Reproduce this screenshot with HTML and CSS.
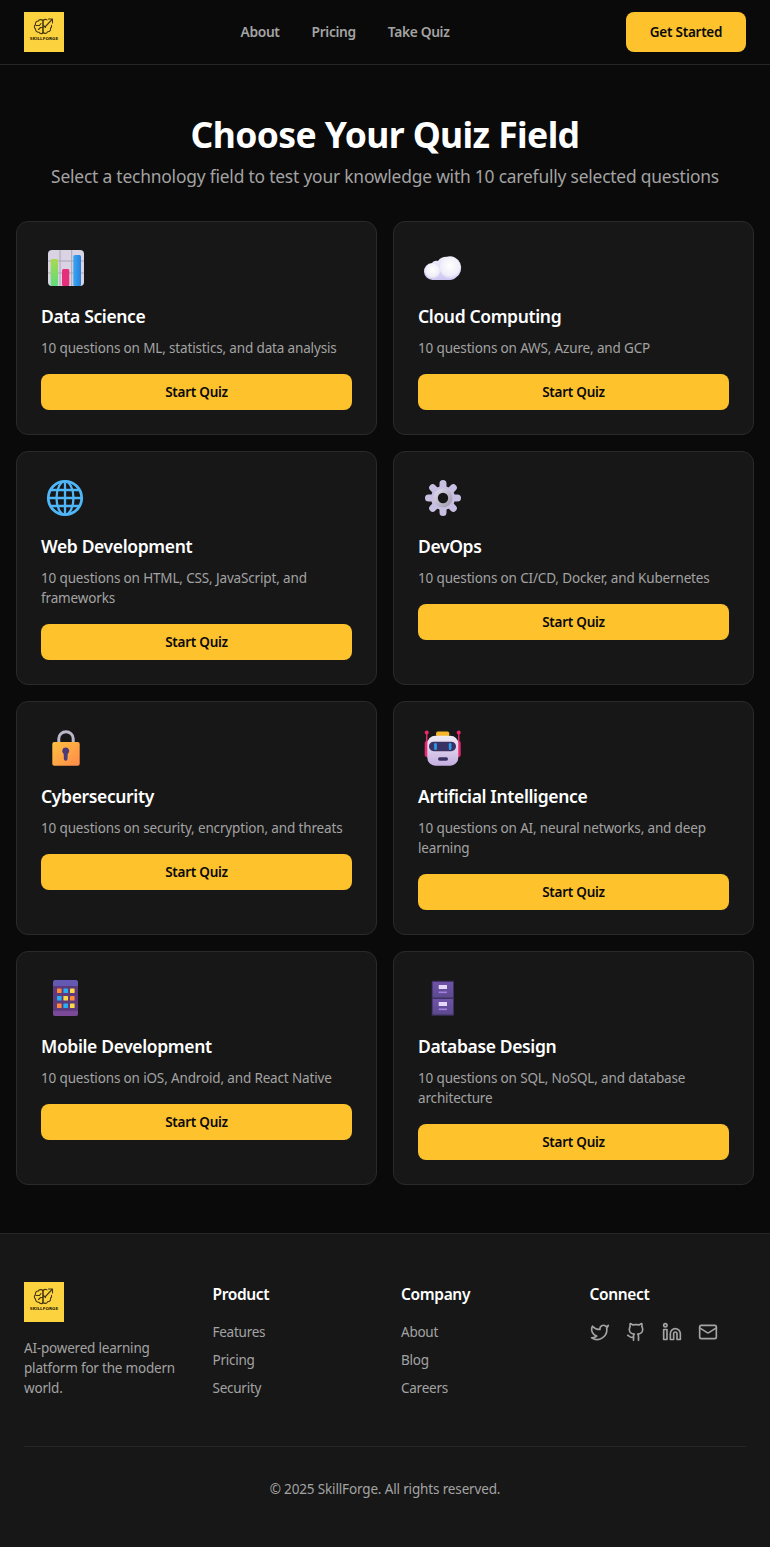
FILE: index.html
```html
<!DOCTYPE html>
<html lang="en">
<head>
<meta charset="utf-8">
<title>SkillForge - Choose Your Quiz Field</title>
<link rel="stylesheet" href="styles.css">
</head>
<body>
<header class="site-header">
  <svg class="logo" viewBox="0 0 40 40" role="img" aria-label="SkillForge">
    <rect width="40" height="40" fill="#fdd23f"/>
    <g fill="none" stroke="#453910" stroke-width="1.100" stroke-linecap="round" stroke-linejoin="round">
      <path d="M19 8.500c-1.500-1.500-4-1-4.500.5-2-.2-3.500 1.500-3 3.500-1.500 1-1.500 3.500 0 4.500-.2 2 1.500 3.500 3.500 3.200 1 1.800 3.500 2 4 .3z"/>
      <path d="M19 8.500c1.200-1.200 3-1.300 4-.6M19 20.500c1.500 1.500 4 1 4.500-.7 2 .2 3.500-1.500 3-3.500 1-.8 1.300-2 1-3"/>
      <path d="M19 8.500v12M12 13.500h3.500l1.500-2M14.500 17.500l2-2H19M19 13l2.500 2.500M21 15l7-7.500M24.500 7H28.500V11"/>
    </g>
    <text class="logo-text" x="20" y="28" text-anchor="middle">SKILLFORGE</text>
  </svg>
  <nav class="main-nav">
    <a href="#">About</a>
    <a href="#">Pricing</a>
    <a href="#">Take Quiz</a>
  </nav>
  <a class="cta" href="#">Get Started</a>
</header>

<main class="page">
  <section class="hero">
    <h1>Choose Your Quiz Field</h1>
    <p>Select a technology field to test your knowledge with 10 carefully selected questions</p>
  </section>

  <section class="quiz-grid">
    <article class="card">
      <svg class="card-icon" viewBox="0 0 50 44">
        <defs>
          <linearGradient id="g-green" x1="0" y1="0" x2="0" y2="1"><stop offset="0" stop-color="#a8d94f"/><stop offset="1" stop-color="#5fdc7c"/></linearGradient>
          <linearGradient id="g-blue" x1="0" y1="0" x2="1" y2="0"><stop offset="0" stop-color="#35a8f5"/><stop offset="1" stop-color="#2b7fd8"/></linearGradient>
        </defs>
        <rect x="7" y="4" width="36" height="36" rx="4" fill="#d9d3e3"/>
        <path d="M19 4v36M30.700 4v36M7 15h36M7 27h36" stroke="#aaa4b4" stroke-width="1"/>
        <rect x="9.700" y="13" width="7.300" height="27" rx="1.500" fill="url(#g-green)"/>
        <rect x="21" y="23" width="7.300" height="17" rx="1.500" fill="#e62f7a"/>
        <rect x="32.300" y="9" width="7.700" height="31" rx="1.500" fill="url(#g-blue)"/>
      </svg>
      <h2>Data Science</h2>
      <p>10 questions on ML, statistics, and data analysis</p>
      <a class="start" href="#">Start Quiz</a>
    </article>

    <article class="card">
      <svg class="card-icon" viewBox="0 0 50 44">
        <defs>
          <linearGradient id="g-cloud-base" x1="0" y1="0" x2="0" y2="1"><stop offset="0" stop-color="#f2f0fa"/><stop offset="1" stop-color="#cdc6f2"/></linearGradient>
          <radialGradient id="g-cloud" cx=".5" cy=".4" r=".65"><stop offset="0" stop-color="#ffffff"/><stop offset=".7" stop-color="#f0eef8"/><stop offset="1" stop-color="#d6d0f2"/></radialGradient>
        </defs>
        <path d="M15 34a8.500 8.500 0 0 1-1-17c1.500-2 3.500-2.500 6-2 2-3.500 6-4.500 9-4.300A11.500 11.500 0 0 1 38 31.500c-1.500 1.500-3.500 2.500-6 2.500z" fill="url(#g-cloud-base)"/>
        <circle cx="32" cy="21.800" r="10.500" fill="url(#g-cloud)"/>
        <circle cx="14.500" cy="25" r="7.500" fill="url(#g-cloud)"/>
      </svg>
      <h2>Cloud Computing</h2>
      <p>10 questions on AWS, Azure, and GCP</p>
      <a class="start" href="#">Start Quiz</a>
    </article>

    <article class="card">
      <svg class="card-icon" viewBox="0 0 50 44">
        <g fill="none" stroke="#4fb6f7" stroke-width="2.300">
          <circle cx="24" cy="22" r="16.700" stroke-width="2.800"/>
          <ellipse cx="24" cy="22" rx="8.500" ry="16.700"/>
          <path d="M24 5v34M7 22h34M9.500 14h29M9.500 30h29"/>
        </g>
      </svg>
      <h2>Web Development</h2>
      <p>10 questions on HTML, CSS, JavaScript, and frameworks</p>
      <a class="start" href="#">Start Quiz</a>
    </article>

    <article class="card">
      <svg class="card-icon" viewBox="0 0 50 44">
        <defs>
          <linearGradient id="g-ring" x1="0" y1="0" x2="1" y2="1"><stop offset="0" stop-color="#e4e0ee"/><stop offset="1" stop-color="#9c95ad"/></linearGradient>
        </defs>
        <g stroke="#c8bfe2" stroke-width="7" stroke-linecap="round">
          <path d="M25 7.500v29M10.500 22h29M14.700 11.700l20.600 20.600M35.300 11.700l-20.600 20.600"/>
        </g>
        <circle cx="25" cy="22" r="12" fill="#c8bfe2"/>
        <circle cx="25" cy="22" r="9.500" fill="url(#g-ring)"/>
        <circle cx="25" cy="22" r="5.200" fill="#171717"/>
      </svg>
      <h2>DevOps</h2>
      <p>10 questions on CI/CD, Docker, and Kubernetes</p>
      <a class="start" href="#">Start Quiz</a>
    </article>

    <article class="card">
      <svg class="card-icon" viewBox="0 0 50 44">
        <defs>
          <linearGradient id="g-lock" x1="0" y1="0" x2="1" y2="1"><stop offset="0" stop-color="#ffc23f"/><stop offset="1" stop-color="#ff8a4a"/></linearGradient>
        </defs>
        <path d="M17.800 18v-5.500a7 6.500 0 0 1 14.400 0V18" fill="none" stroke="#bdb6c8" stroke-width="3"/>
        <rect x="11.300" y="16" width="27.400" height="23.700" rx="2" fill="url(#g-lock)"/>
        <path d="M24.700 21.500a3.500 3.500 0 0 1 2 6.400L26.500 33a1.800 1.800 0 0 1-3.600 0l-.2-5.100A3.500 3.500 0 0 1 24.700 21.500z" fill="#4a3a78"/>
      </svg>
      <h2>Cybersecurity</h2>
      <p>10 questions on security, encryption, and threats</p>
      <a class="start" href="#">Start Quiz</a>
    </article>

    <article class="card">
      <svg class="card-icon" viewBox="0 0 50 44">
        <defs>
          <linearGradient id="g-head" x1="0" y1="0" x2="0" y2="1"><stop offset="0" stop-color="#efeaf4"/><stop offset="1" stop-color="#c4aee0"/></linearGradient>
        </defs>
        <path d="M8.700 8v22M40.700 8v22" stroke="#e02b6e" stroke-width="1.500"/>
        <rect x="6.700" y="15" width="5" height="16" rx="2" fill="#e8286e"/>
        <rect x="37.700" y="15" width="5" height="16" rx="2" fill="#e8286e"/>
        <circle cx="8.700" cy="6.500" r="2" fill="#f0286a"/>
        <circle cx="40.700" cy="6.500" r="2" fill="#f0286a"/>
        <rect x="18" y="5.500" width="13.300" height="5" rx="2" fill="#f6b52a"/>
        <rect x="9.300" y="9.700" width="31" height="30" rx="8" fill="url(#g-head)"/>
        <rect x="11" y="15.700" width="27" height="9.500" rx="4.700" fill="#3a3262"/>
        <rect x="16.200" y="17" width="2.600" height="7" rx="1.300" fill="#2a9df0"/>
        <rect x="30.800" y="17" width="2.600" height="7" rx="1.300" fill="#2a9df0"/>
        <rect x="20" y="31.300" width="10" height="3.400" rx="1.700" fill="#3a3262"/>
      </svg>
      <h2>Artificial Intelligence</h2>
      <p>10 questions on AI, neural networks, and deep learning</p>
      <a class="start" href="#">Start Quiz</a>
    </article>

    <article class="card">
      <svg class="card-icon" viewBox="0 0 50 44">
        <rect x="12" y="4" width="25" height="36" rx="2.500" fill="#5c3a7c"/>
        <path d="M12 10V6.500A2.500 2.500 0 0 1 14.500 4h20A2.500 2.500 0 0 1 37 6.500V10z" fill="#6459b2"/>
        <path d="M12 34.700h25V37.500a2.500 2.500 0 0 1-2.500 2.500h-20A2.500 2.500 0 0 1 12 37.500z" fill="#7a4a98"/>
        <rect x="16" y="12.500" width="4.600" height="4.600" rx=".6" fill="#ff8a3a"/>
        <rect x="22.400" y="12.500" width="4.600" height="4.600" rx=".6" fill="#27aef5"/>
        <rect x="29" y="12.500" width="4.600" height="4.600" rx=".6" fill="#fbdc45"/>
        <rect x="16" y="20" width="4.600" height="4.600" rx=".6" fill="#27aef5"/>
        <rect x="22.400" y="20" width="4.600" height="4.600" rx=".6" fill="#fbdc45"/>
        <rect x="29" y="20" width="4.600" height="4.600" rx=".6" fill="#ff8a3a"/>
        <rect x="16" y="27.400" width="4.600" height="4.600" rx=".6" fill="#ff8a3a"/>
        <rect x="22.400" y="27.400" width="4.600" height="4.600" rx=".6" fill="#27aef5"/>
        <rect x="29" y="27.400" width="4.600" height="4.600" rx=".6" fill="#fbdc45"/>
      </svg>
      <h2>Mobile Development</h2>
      <p>10 questions on iOS, Android, and React Native</p>
      <a class="start" href="#">Start Quiz</a>
    </article>

    <article class="card">
      <svg class="card-icon" viewBox="0 0 50 44">
        <defs>
          <linearGradient id="g-drawer" x1="0" y1="0" x2="0" y2="1"><stop offset="0" stop-color="#6f52a8"/><stop offset="1" stop-color="#5b4a8e"/></linearGradient>
        </defs>
        <rect x="13.700" y="4.700" width="22.300" height="35" rx="1" fill="#3f3060"/>
        <rect x="14.700" y="6" width="20.300" height="15.500" fill="url(#g-drawer)"/>
        <rect x="14.700" y="23" width="20.300" height="15.500" fill="url(#g-drawer)"/>
        <rect x="20.700" y="9" width="8.300" height="4" fill="#e4d8f6"/>
        <rect x="20.700" y="15.500" width="8.300" height="1.600" fill="#a57fe0"/>
        <rect x="20.700" y="26" width="8.300" height="4" fill="#e4d8f6"/>
        <rect x="20.700" y="32.500" width="8.300" height="1.600" fill="#a57fe0"/>
      </svg>
      <h2>Database Design</h2>
      <p>10 questions on SQL, NoSQL, and database architecture</p>
      <a class="start" href="#">Start Quiz</a>
    </article>
  </section>
</main>

<footer class="site-footer">
  <div class="footer-grid">
    <div class="footer-brand">
      <svg class="logo" viewBox="0 0 40 40" role="img" aria-label="SkillForge">
        <rect width="40" height="40" fill="#fdd23f"/>
        <g fill="none" stroke="#453910" stroke-width="1.100" stroke-linecap="round" stroke-linejoin="round">
          <path d="M19 8.500c-1.500-1.500-4-1-4.500.5-2-.2-3.500 1.500-3 3.500-1.500 1-1.500 3.500 0 4.500-.2 2 1.500 3.500 3.500 3.200 1 1.800 3.500 2 4 .3z"/>
          <path d="M19 8.500c1.200-1.200 3-1.300 4-.6M19 20.500c1.500 1.500 4 1 4.500-.7 2 .2 3.500-1.500 3-3.500 1-.8 1.300-2 1-3"/>
          <path d="M19 8.500v12M12 13.500h3.500l1.500-2M14.500 17.500l2-2H19M19 13l2.500 2.500M21 15l7-7.500M24.500 7H28.500V11"/>
        </g>
        <text class="logo-text" x="20" y="28" text-anchor="middle">SKILLFORGE</text>
      </svg>
      <p>AI-powered learning platform for the modern world.</p>
    </div>
    <div class="footer-col">
      <h3>Product</h3>
      <ul>
        <li><a href="#">Features</a></li>
        <li><a href="#">Pricing</a></li>
        <li><a href="#">Security</a></li>
      </ul>
    </div>
    <div class="footer-col">
      <h3>Company</h3>
      <ul>
        <li><a href="#">About</a></li>
        <li><a href="#">Blog</a></li>
        <li><a href="#">Careers</a></li>
      </ul>
    </div>
    <div class="footer-col">
      <h3>Connect</h3>
      <div class="socials">
        <a href="#" aria-label="Twitter"><svg viewBox="0 0 24 24"><path d="M22 4s-.7 2.100-2 3.400c1.600 10-9.400 17.300-18 11.600 2.200.1 4.400-.6 6-2C3 15.500.5 9.600 3 5c2.200 2.600 5.600 4.100 9 4-.9-4.200 4-6.600 7-3.800 1.100 0 3-1.200 3-1.200z"/></svg></a>
        <a href="#" aria-label="GitHub"><svg viewBox="0 0 24 24"><path d="M15 22v-4a4.800 4.800 0 0 0-1-3.500c3 0 6-2 6-5.500.08-1.250-.27-2.480-1-3.500.28-1.150.28-2.350 0-3.500 0 0-1 0-3 1.500-2.640-.5-5.360-.5-8 0C6 2 5 2 5 2c-.3 1.150-.3 2.350 0 3.500A5.403 5.403 0 0 0 4 9c0 3.500 3 5.500 6 5.500-.39.49-.68 1.050-.85 1.650-.17.6-.22 1.230-.15 1.850v4"/><path d="M9 18c-4.510 2-5-2-7-2"/></svg></a>
        <a href="#" aria-label="LinkedIn"><svg viewBox="0 0 24 24"><path d="M16 8a6 6 0 0 1 6 6v7h-4v-7a2 2 0 0 0-2-2 2 2 0 0 0-2 2v7h-4v-7a6 6 0 0 1 6-6z"/><rect x="2" y="9" width="4" height="12"/><circle cx="4" cy="4" r="2"/></svg></a>
        <a href="#" aria-label="Email"><svg viewBox="0 0 24 24"><rect x="2" y="4" width="20" height="16" rx="2"/><path d="m22 7-8.970 5.700a1.940 1.940 0 0 1-2.060 0L2 7"/></svg></a>
      </div>
    </div>
  </div>
  <p class="copyright">© 2025 SkillForge. All rights reserved.</p>
</footer>
</body>
</html>
```
FILE: styles.css
```css
* {
  box-sizing: border-box;
}

html,
body {
  margin: 0;
  padding: 0;
}

body {
  background: #0a0a0a;
  color: #ffffff;
  font-family: "Noto Sans", "Open Sans", sans-serif;
  font-size: 13.5px;
  line-height: 20px;
}

a {
  color: inherit;
  text-decoration: none;
}

.logo {
  display: block;
  width: 40px;
  height: 40px;
  flex: none;
}

.logo-text {
  font-family: "DejaVu Sans", sans-serif;
  font-size: 4.1px;
  font-weight: 700;
  fill: #2e2608;
}

.site-header {
  display: flex;
  align-items: center;
  justify-content: space-between;
  padding: 12px 24px;
  border-bottom: 1px solid #262626;
}

.main-nav {
  display: flex;
  gap: 32px;
  color: #a3a3a3;
  font-size: 13.8px;
  font-weight: 600;
  letter-spacing: -0.35px;
}

.cta {
  display: flex;
  align-items: center;
  justify-content: center;
  width: 120px;
  height: 40px;
  border-radius: 8px;
  background: #fdc22c;
  color: #0a0a0a;
  font-weight: 600;
  letter-spacing: -0.25px;
}

.page {
  padding: 48px 16px;
}

.hero {
  margin-bottom: 31px;
  text-align: center;
}

.hero h1 {
  margin: 0 0 7px;
  font-size: 35.5px;
  line-height: 42px;
  font-weight: 700;
  letter-spacing: -0.6px;
}

.hero p {
  margin: 0;
  color: #a3a3a3;
  font-size: 17.4px;
  line-height: 28px;
  letter-spacing: -0.2px;
}

.quiz-grid {
  display: grid;
  grid-template-columns: repeat(2, 1fr);
  gap: 16px;
}

.card {
  padding: 24px;
  background: #171717;
  border: 1px solid #2a2a2a;
  border-radius: 12px;
}

.card-icon {
  display: block;
  width: 50px;
  height: 44px;
  margin-bottom: 12px;
}

.card h2 {
  margin: 0 0 8px;
  font-size: 17.5px;
  line-height: 28px;
  font-weight: 600;
  letter-spacing: -0.36px;
}

.card p {
  margin: 0 0 16px;
  color: #a3a3a3;
  letter-spacing: -0.15px;
}

.start {
  display: flex;
  align-items: center;
  justify-content: center;
  height: 36px;
  border-radius: 8px;
  background: #fdc22c;
  color: #0a0a0a;
  font-weight: 600;
  letter-spacing: -0.25px;
}

.site-footer {
  padding: 48px 24px;
  background: #171717;
  border-top: 1px solid #262626;
}

.footer-grid {
  display: grid;
  grid-template-columns: repeat(4, 1fr);
  gap: 32px;
  padding-bottom: 48px;
  border-bottom: 1px solid #262626;
}

.footer-brand p {
  margin: 16px 0 0;
  color: #a3a3a3;
  letter-spacing: -0.2px;
}

.footer-col h3 {
  margin: 0 0 16px;
  font-size: 15.5px;
  line-height: 24px;
  font-weight: 600;
  letter-spacing: -0.35px;
}

.footer-col ul {
  display: flex;
  flex-direction: column;
  gap: 8px;
  margin: 0;
  padding: 0;
  list-style: none;
  color: #a3a3a3;
  letter-spacing: -0.25px;
}

.socials {
  display: flex;
  gap: 16px;
}

.socials a {
  display: block;
  width: 20px;
  height: 20px;
}

.socials svg {
  display: block;
  width: 20px;
  height: 20px;
  fill: none;
  stroke: #a3a3a3;
  stroke-width: 2;
  stroke-linecap: round;
  stroke-linejoin: round;
}

.copyright {
  margin: 32px 0 0;
  color: #a3a3a3;
  text-align: center;
  letter-spacing: -0.15px;
}
```
